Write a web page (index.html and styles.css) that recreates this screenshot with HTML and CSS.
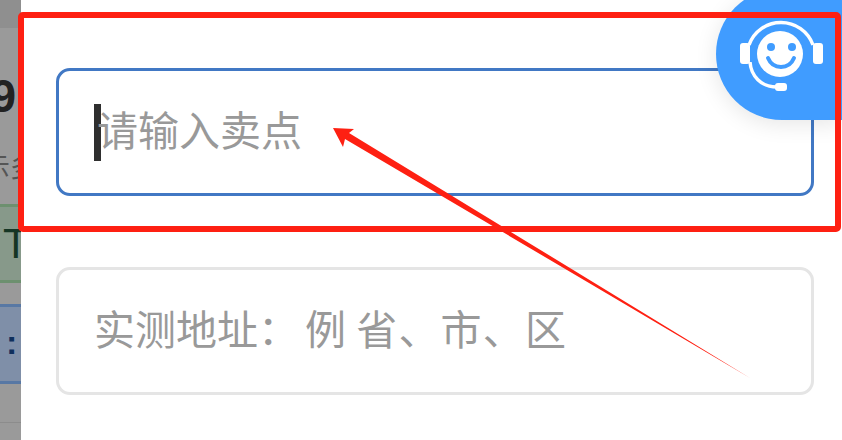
FILE: index.html
```html
<!DOCTYPE html>
<html>
<head>
    <title>卖点</title>
    <link rel="stylesheet" href="styles.css">
</head>
<body>
    <div class="backdrop">
        <div class="backdrop-top"></div>
        <div class="backdrop-price">9</div>
        <div class="backdrop-note">示多</div>
        <div class="backdrop-green">T</div>
        <div class="backdrop-blue">:</div>
        <div class="backdrop-foot"></div>
    </div>

    <div class="panel">
        <div class="field field-active">
            <span class="caret"></span>
            <span class="hint">请输入卖点</span>
        </div>
        <div class="field">
            <span class="hint">实测地址<span class="hint-colon">：</span>例<span class="hint-gap"> </span><span class="hint-tail">省、市、区</span></span>
        </div>
    </div>

    <div class="service-button">
        <svg class="service-icon" viewBox="0 0 90 80" width="90" height="80">
            <!-- headband and mic boom -->
            <path d="M12 31 A34 34 0 0 1 76 31" fill="none" stroke="#fff" stroke-width="3.5"/>
            <path d="M13 48 C14 62 24 73 40 73" fill="none" stroke="#fff" stroke-width="3.5"/>
            <rect x="3" y="29" width="10" height="21" rx="3" fill="#fff"/>
            <rect x="76" y="29" width="10" height="21" rx="3" fill="#fff"/>
            <rect x="38" y="69" width="12" height="8" rx="3" fill="#fff"/>
            <!-- face -->
            <circle cx="43" cy="40" r="23" fill="#fff"/>
            <circle cx="34" cy="33" r="4" fill="#409cff"/>
            <circle cx="55" cy="33" r="4" fill="#409cff"/>
            <path d="M31 44 C36 56 52 56 57 44" fill="none" stroke="#409cff" stroke-width="4" stroke-linecap="round"/>
        </svg>
    </div>

    <div class="mark-box"></div>
    <svg class="mark-arrow" viewBox="0 0 842 440" width="842" height="440">
        <polygon points="333,128 354,129 349,133 750,378 345,139 343,147" fill="#fe2012"/>
    </svg>
</body>
</html>
```

FILE: styles.css
```css
html, body {
    margin: 0;
    height: 100%;
}

body {
    display: flex;
    width: 842px;
    height: 440px;
    overflow: hidden;
    position: relative;
    background: #fff;
    font-family: "Noto Sans CJK SC", "Liberation Sans", sans-serif;
}

.backdrop {
    width: 21px;
    height: 440px;
    flex-shrink: 0;
    overflow: hidden;
    background: #9a9a9a;
    white-space: nowrap;
}

.backdrop-top {
    height: 28px;
    background: #8f8f8f;
}

.backdrop-price {
    width: 40px;
    height: 60px;
    margin-top: 38px;
    margin-left: -24px;
    text-align: right;
    font-family: "Liberation Sans", sans-serif;
    font-size: 46px;
    font-weight: bold;
    line-height: 60px;
    color: #222;
}

.backdrop-note {
    width: 60px;
    height: 40px;
    margin-top: 20px;
    margin-left: -17px;
    font-size: 27px;
    line-height: 40px;
    color: #555;
}

.backdrop-green {
    box-sizing: border-box;
    width: 60px;
    height: 79px;
    margin-top: 18px;
    padding-left: 3px;
    background: #87998a;
    border-top: 3px solid #6d906f;
    border-bottom: 3px solid #6d906f;
    font-family: "Liberation Sans", sans-serif;
    font-size: 42px;
    line-height: 73px;
    color: #153524;
}

.backdrop-blue {
    box-sizing: border-box;
    width: 60px;
    height: 80px;
    margin-top: 21px;
    padding-left: 6px;
    background: #7f8fa8;
    border-top: 3px solid #5878a4;
    border-bottom: 3px solid #5878a4;
    font-family: "Liberation Sans", sans-serif;
    font-size: 34px;
    font-weight: bold;
    line-height: 70px;
    color: #0f2f5c;
}

.backdrop-foot {
    height: 1px;
    margin-top: 38px;
    background: #8c8c8c;
}

.panel {
    flex: 1;
    display: flex;
    flex-direction: column;
    gap: 71px;
    padding: 68px 28px 0 35px;
    background: #fff;
}

.field {
    box-sizing: border-box;
    display: flex;
    align-items: center;
    height: 128px;
    padding-left: 35px;
    border: 3px solid #e5e5e5;
    border-radius: 14px;
}

.field-active {
    border-color: #4178c4;
}

.caret {
    width: 7px;
    height: 57px;
    margin-right: -4px;
    background: #2f2f2f;
}

.hint {
    margin-bottom: 8px;
    font-size: 41px;
    color: #999;
    white-space: pre;
}

.hint-colon {
    margin-right: 6px;
}

.hint-gap {
    margin-right: 1px;
}

.hint-tail {
    letter-spacing: 1.2px;
}

.service-button {
    position: absolute;
    top: -12px;
    right: 0;
    left: 716px;
    height: 132px;
    display: flex;
    align-items: center;
    justify-content: center;
    padding-left: 6px;
    border-radius: 66px 0 0 66px;
    background: #409cff;
    box-shadow: 0 4px 22px rgba(0, 0, 0, 0.1);
}

.mark-box {
    position: absolute;
    top: 12px;
    left: 18px;
    width: 823px;
    height: 220px;
    box-sizing: border-box;
    border: 6px solid #fe2012;
    border-radius: 5px;
}

.mark-arrow {
    position: absolute;
    top: 0;
    left: 0;
}
```
